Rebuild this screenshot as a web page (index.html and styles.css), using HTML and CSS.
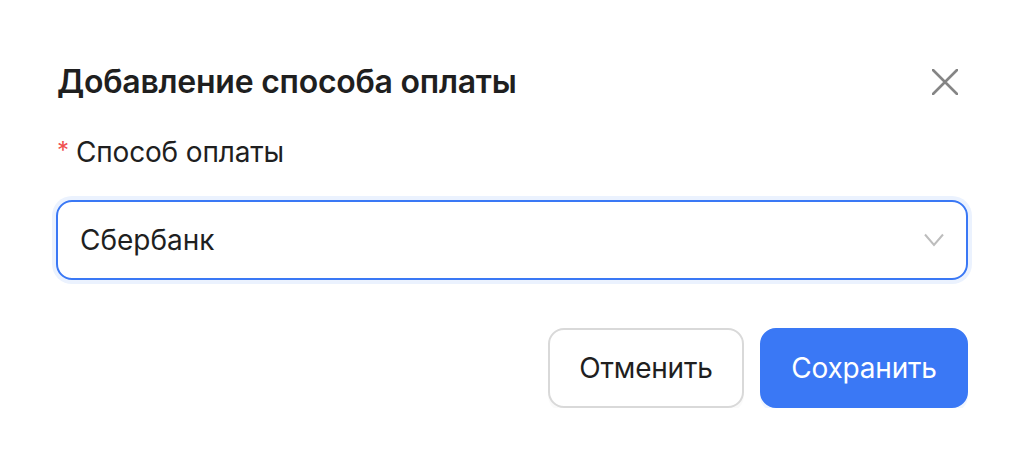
FILE: index.html
```html
<!DOCTYPE html>
<html lang="ru">
<head>
<meta charset="utf-8">
<title>Добавление способа оплаты</title>
<link rel="stylesheet" href="styles.css">
</head>
<body>
<div class="modal">
  <div class="header">
    <div class="title">Добавление способа оплаты</div>
    <button class="close" aria-label="Закрыть">
      <svg width="26" height="26" viewBox="0 0 26 26"><path d="M1 1 L25 25 M25 1 L1 25" stroke="#858585" stroke-width="2.6" stroke-linecap="round" fill="none"/></svg>
    </button>
  </div>
  <div class="label"><span class="req">*</span>Способ оплаты</div>
  <div class="select">
    <span class="value">Сбербанк</span>
    <svg class="chev" width="20" height="14" viewBox="0 0 20 14"><path d="M1 1.5 L10 12 L19 1.5" stroke="#bdbdbd" stroke-width="2" fill="none"/></svg>
  </div>
  <div class="footer">
    <button class="btn btn-default">Отменить</button>
    <button class="btn btn-primary">Сохранить</button>
  </div>
</div>
</body>
</html>
```
FILE: styles.css
```css
html, body {
  margin: 0;
  padding: 0;
  background: #ffffff;
}
body {
  font-family: Inter, "Noto Sans", "Liberation Sans", sans-serif;
  color: #1f1f1f;
}
.modal {
  display: flex;
  flex-direction: column;
  padding: 62px 56px 0 56px;
}
.header {
  display: flex;
  align-items: center;
  justify-content: space-between;
  height: 40px;
}
.title {
  font-size: 32px;
  font-weight: 600;
  line-height: 40px;
  padding-left: 1px;
  letter-spacing: -0.25px;
}
.close {
  border: none;
  background: none;
  padding: 0;
  margin-right: 10px;
  width: 26px;
  height: 26px;
  display: flex;
}
.label {
  margin-top: 30px;
  font-size: 28px;
  line-height: 40px;
  padding-left: 1px;
  display: flex;
  align-items: center;
  letter-spacing: -0.15px;
}
.req {
  color: #f0504f;
  font-size: 24px;
  margin-right: 7px;
  position: relative;
  top: -1px;
}
.select {
  margin-top: 28px;
  height: 80px;
  box-sizing: border-box;
  border: 2px solid #3a78f5;
  border-radius: 16px;
  box-shadow: 0 0 0 4px #ebf2fe;
  display: flex;
  align-items: center;
  justify-content: space-between;
  padding: 0 22px;
}
.value {
  font-size: 28px;
}
.chev {
  display: block;
}
.footer {
  margin-top: 48px;
  display: flex;
  justify-content: flex-end;
  gap: 16px;
}
.btn {
  height: 80px;
  box-sizing: border-box;
  border-radius: 16px;
  font-family: inherit;
  font-size: 28px;
  letter-spacing: -0.2px;
  padding: 0;
  cursor: pointer;
}
.btn-default {
  background: #ffffff;
  border: 2px solid #d9d9d9;
  color: #1f1f1f;
  width: 196px;
  box-shadow: 0 4px 0 rgba(0, 0, 0, 0.02);
}
.btn-primary {
  background: #3a78f5;
  border: 2px solid #3a78f5;
  color: #ffffff;
  width: 208px;
  box-shadow: 0 4px 0 rgba(5, 105, 255, 0.06);
}
```
